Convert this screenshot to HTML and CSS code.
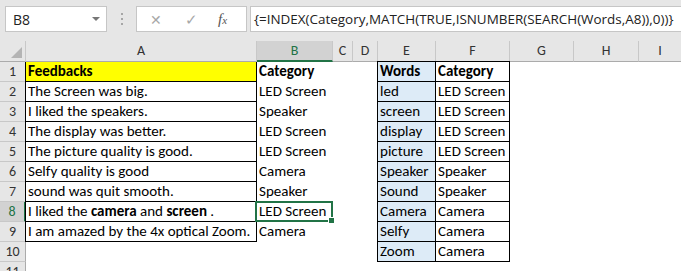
FILE: index.html
```
<!DOCTYPE html>
<html lang="en">
<head>
<meta charset="UTF-8">
<title>Keyword category lookup</title>
<link rel="stylesheet" href="styles.css">
</head>
<body>

<!-- formula bar -->
<div class="toolbar">
    <div class="namebox">
        <span>B8</span>
        <span class="dropdown"></span>
    </div>
    <div class="grip"><i></i><i></i><i></i></div>
    <div class="fxbox">
        <span class="btn-x">&#x2715;</span>
        <span class="btn-ok">&#x2713;</span>
        <span class="btn-fx">f<small>x</small></span>
    </div>
    <div class="formula">{=INDEX(Category,MATCH(TRUE,ISNUMBER(SEARCH(Words,A8)),0))}</div>
</div>

<!-- sheet -->
<div class="sheet">
    <div class="ch corner"><span class="tri"></span></div>
    <div class="ch">A</div>
    <div class="ch sel-col">B</div>
    <div class="ch">C</div>
    <div class="ch">D</div>
    <div class="ch">E</div>
    <div class="ch">F</div>
    <div class="ch">G</div>
    <div class="ch">H</div>
    <div class="ch last">I</div>

    <div class="rh">1</div>
    <div class="c box-a yellow b">Feedbacks</div>
    <div class="c b">Category</div>
    <div class="c"></div><div class="c"></div>
    <div class="c box-e top b">Words</div>
    <div class="c box-f top b">Category</div>
    <div class="c"></div><div class="c"></div><div class="c"></div>

    <div class="rh">2</div>
    <div class="c box-a">The Screen was big.</div>
    <div class="c">LED Screen</div>
    <div class="c"></div><div class="c"></div>
    <div class="c box-e">led</div>
    <div class="c box-f">LED Screen</div>
    <div class="c"></div><div class="c"></div><div class="c"></div>

    <div class="rh">3</div>
    <div class="c box-a">I liked the speakers.</div>
    <div class="c">Speaker</div>
    <div class="c"></div><div class="c"></div>
    <div class="c box-e">screen</div>
    <div class="c box-f">LED Screen</div>
    <div class="c"></div><div class="c"></div><div class="c"></div>

    <div class="rh">4</div>
    <div class="c box-a">The display was better.</div>
    <div class="c">LED Screen</div>
    <div class="c"></div><div class="c"></div>
    <div class="c box-e">display</div>
    <div class="c box-f">LED Screen</div>
    <div class="c"></div><div class="c"></div><div class="c"></div>

    <div class="rh">5</div>
    <div class="c box-a">The picture quality is good.</div>
    <div class="c">LED Screen</div>
    <div class="c"></div><div class="c"></div>
    <div class="c box-e">picture</div>
    <div class="c box-f">LED Screen</div>
    <div class="c"></div><div class="c"></div><div class="c"></div>

    <div class="rh">6</div>
    <div class="c box-a">Selfy quality is good</div>
    <div class="c">Camera</div>
    <div class="c"></div><div class="c"></div>
    <div class="c box-e">Speaker</div>
    <div class="c box-f">Speaker</div>
    <div class="c"></div><div class="c"></div><div class="c"></div>

    <div class="rh">7</div>
    <div class="c box-a">sound was quit smooth.</div>
    <div class="c">Speaker</div>
    <div class="c"></div><div class="c"></div>
    <div class="c box-e">Sound</div>
    <div class="c box-f">Speaker</div>
    <div class="c"></div><div class="c"></div><div class="c"></div>

    <div class="rh sel-row">8</div>
    <div class="c box-a">I liked the&nbsp;<b>camera</b>&nbsp;and&nbsp;<b>screen</b>&nbsp;.</div>
    <div class="c active">LED Screen<span class="handle"></span></div>
    <div class="c"></div><div class="c"></div>
    <div class="c box-e">Camera</div>
    <div class="c box-f">Camera</div>
    <div class="c"></div><div class="c"></div><div class="c"></div>

    <div class="rh">9</div>
    <div class="c box-a">I am amazed by the 4x optical Zoom.</div>
    <div class="c">Camera</div>
    <div class="c"></div><div class="c"></div>
    <div class="c box-e">Selfy</div>
    <div class="c box-f">Camera</div>
    <div class="c"></div><div class="c"></div><div class="c"></div>

    <div class="rh">10</div>
    <div class="c"></div><div class="c"></div>
    <div class="c"></div><div class="c"></div>
    <div class="c box-e">Zoom</div>
    <div class="c box-f">Camera</div>
    <div class="c"></div><div class="c"></div><div class="c"></div>

    <div class="rh">11</div>
    <div class="c"></div><div class="c"></div>
    <div class="c"></div><div class="c"></div>
    <div class="c"></div><div class="c"></div>
    <div class="c"></div><div class="c"></div><div class="c"></div>
</div>

</body>
</html>
```

FILE: styles.css
```
body {
    margin: 0;
    width: 681px;
    height: 271px;
    overflow: hidden;
    background-color: #fff;
    font-family: Carlito, Calibri, "Liberation Sans", sans-serif;
    color: #000;
}
.toolbar {
    display: flex;
    align-items: flex-start;
    height: 41px;
    padding-top: 6px;
    box-sizing: border-box;
    background-color: #e6e6e6;
    font-family: "Open Sans", "Noto Sans", sans-serif;
}
.namebox {
    flex-shrink: 0;
    display: flex;
    align-items: center;
    justify-content: space-between;
    width: 102px;
    height: 26px;
    margin-left: 5px;
    padding: 0 6px 0 7px;
    box-sizing: border-box;
    background-color: #fff;
    border: 1px solid #c6c6c6;
    font-size: 14px;
    color: #222;
}
.dropdown {
    width: 0;
    height: 0;
    border-left: 4px solid transparent;
    border-right: 4px solid transparent;
    border-top: 4px solid #777;
}
.grip {
    flex-shrink: 0;
    display: flex;
    flex-direction: column;
    gap: 3px;
    width: 29px;
    align-items: center;
    padding-top: 7px;
}
.grip i {
    display: block;
    width: 2px;
    height: 2px;
    background-color: #a6a6a6;
}
.fxbox {
    flex-shrink: 0;
    display: flex;
    align-items: center;
    width: 111px;
    height: 26px;
    box-sizing: border-box;
    background-color: #fff;
    border: 1px solid #c6c6c6;
}
.btn-x {
    width: 20px;
    margin-left: 9px;
    color: #a8a8a8;
    font-size: 14px;
    text-align: center;
}
.btn-ok {
    width: 20px;
    margin-left: 15px;
    color: #a8a8a8;
    font-size: 15px;
    text-align: center;
}
.btn-fx {
    margin-left: 17px;
    font-family: "Liberation Serif", serif;
    font-style: italic;
    font-size: 15px;
    color: #555;
}
.btn-fx small {
    font-size: 11px;
}
.formula {
    flex: 1;
    min-width: 0;
    height: 26px;
    margin-left: 3px;
    padding-left: 3px;
    box-sizing: border-box;
    background-color: #fff;
    border: 1px solid #c6c6c6;
    border-right: none;
    font-size: 13.45px;
    line-height: 24px;
    color: #222;
    white-space: nowrap;
    overflow: hidden;
}
.sheet {
    display: grid;
    grid-template-columns: 26px 231px 76px 20px 25px 58px 74px 64px 65px 1fr;
    grid-template-rows: 21px repeat(11, 20px);
    font-size: 15px;
}
.ch {
    background-color: #e6e6e6;
    border-right: 1px solid #c8c8c8;
    border-bottom: 1px solid #ababab;
    color: #333;
    font-size: 14px;
    line-height: 20px;
    text-align: center;
}
.ch.last {
    border-right: none;
}
.corner {
    position: relative;
}
.tri {
    position: absolute;
    right: 3px;
    bottom: 3px;
    width: 0;
    height: 0;
    border-left: 11px solid transparent;
    border-bottom: 11px solid #b4b4b4;
}
.rh {
    background-color: #e6e6e6;
    border-right: 1px solid #ababab;
    border-bottom: 1px solid #c8c8c8;
    color: #333;
    font-size: 14px;
    line-height: 20px;
    text-align: center;
}
.sel-col {
    background-color: #d2d2d2;
    color: #217346;
    border-bottom: 2px solid #217346;
    line-height: 19px;
}
.sel-row {
    background-color: #d2d2d2;
    color: #217346;
    border-right: 2px solid #217346;
}
.c {
    display: flex;
    align-items: flex-end;
    padding: 0 0 0 2px;
    box-sizing: border-box;
    border-right: 1px solid transparent;
    border-bottom: 1px solid transparent;
    white-space: nowrap;
    overflow: visible;
    line-height: 19px;
}
.b {
    font-weight: bold;
}
.yellow {
    background-color: #ffff00;
}
.box-a {
    border-right-color: #000;
    border-bottom-color: #000;
    box-shadow: -1px 0 0 #000;
}
.box-e {
    background-color: #ddebf7;
    border-right-color: #000;
    border-bottom-color: #000;
    box-shadow: -1px 0 0 #000;
}
.box-f {
    border-right-color: #000;
    border-bottom-color: #000;
}
.box-e.top {
    box-shadow: -1px 0 0 #000, 0 -1px 0 #000, -1px -1px 0 #000;
}
.box-f.top {
    box-shadow: 0 -1px 0 #000;
}
.active {
    position: relative;
}
.active::after {
    content: "";
    position: absolute;
    left: -2px;
    top: -1px;
    width: 78px;
    height: 21px;
    box-sizing: border-box;
    border: 2px solid #217346;
}
.handle {
    position: absolute;
    left: 71px;
    top: 15px;
    width: 7px;
    height: 7px;
    box-sizing: border-box;
    background-color: #217346;
    border: 1px solid #fff;
    z-index: 1;
}
```
